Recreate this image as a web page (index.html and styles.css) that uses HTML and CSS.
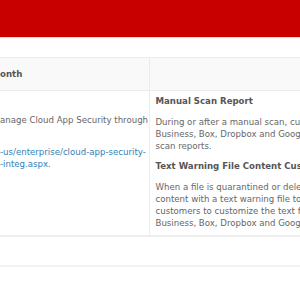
FILE: index.html
```html
<!DOCTYPE html>
<html lang="en">
<head>
  <meta charset="UTF-8" />
  <title>Release Notes - Cloud App Security</title>
  <link rel="stylesheet" href="styles.css">
</head>
<body>
  <div class="topbar"></div>

  <div class="content">
    <table class="notes">
      <thead>
        <tr>
          <th class="col-left">onth</th>
          <th class="col-right"></th>
        </tr>
      </thead>
      <tbody>
        <tr>
          <td class="col-left">
            <p class="blurb">anage Cloud App Security through</p>
            <p class="blurb link-block">
              <a href="#">-us/enterprise/cloud-app-security-<br>-integ.aspx</a>.
            </p>
          </td>
          <td class="col-right">
            <h4 class="feature">Manual Scan Report</h4>
            <p class="feature-text">During or after a manual scan, customers can view and export the OneDrive for<br>Business, Box, Dropbox and Google Drive<br>scan reports.</p>
            <h4 class="feature">Text Warning File Content Customization</h4>
            <p class="feature-text">When a file is quarantined or deleted, Cloud App Security replaces the original file<br>content with a text warning file to notify users. This release allows<br>customers to customize the text for OneDrive for<br>Business, Box, Dropbox and Google Drive.</p>
          </td>
        </tr>
        <tr class="spacer-row">
          <td class="col-left"></td>
          <td class="col-right"></td>
        </tr>
      </tbody>
    </table>
  </div>
</body>
</html>
```

FILE: styles.css
```css
* {
  box-sizing: border-box;
  margin: 0;
  padding: 0;
}

body {
  font-family: 'DejaVu Sans', Verdana, sans-serif;
  font-size: 8.6px;
  color: #666;
  background: #fff;
  overflow: hidden;
  width: 300px;
  height: 300px;
}

.topbar {
  height: 38px;
  background: #c80000;
  border-bottom: 1px solid #f2d6d6;
}

.content {
  padding-top: 19px;
}

.notes {
  border-collapse: collapse;
  width: 520px;
  table-layout: fixed;
}

.notes .col-left {
  width: 149px;
  border-right: 1px solid #ececec;
}

.notes th {
  height: 33px;
  background: #f9f9f9;
  border-top: 1px solid #ececec;
  border-bottom: 1px solid #ececec;
  text-align: left;
  font-weight: bold;
  color: #555;
  vertical-align: middle;
}

.notes td {
  vertical-align: top;
  border-bottom: 2px solid #eeeeee;
}

.notes td.col-left {
  padding-top: 23px;
}

.notes td.col-right {
  padding: 4px 0 6px 6px;
}

.blurb {
  line-height: 12px;
  white-space: nowrap;
}

.link-block {
  margin-top: 20px;
}

.blurb a {
  color: #2f7fb8;
  text-decoration: none;
}

.feature {
  font-size: 8.6px;
  font-weight: bold;
  color: #555;
  line-height: 12px;
  margin-bottom: 9px;
  white-space: nowrap;
}

.feature-text {
  line-height: 12px;
  margin-bottom: 8px;
  white-space: nowrap;
}

.feature-text:last-child {
  margin-bottom: 0;
}

.notes .spacer-row td {
  height: 30px;
  border-right: none;
  border-bottom: 2px solid #f2f2f2;
}
```
